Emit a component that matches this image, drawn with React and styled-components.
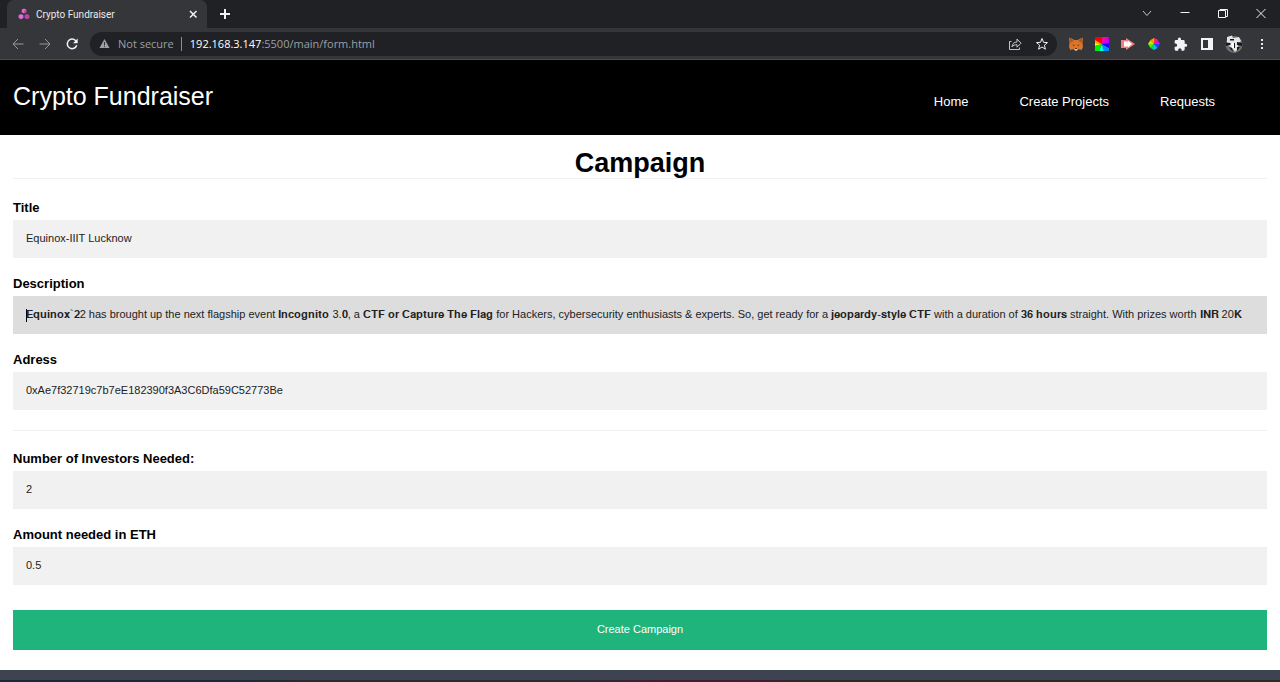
import React from 'react'

import styled, { createGlobalStyle } from 'styled-components';


const extensions = [
    { name: 'MetaMask', Icon: FoxIcon },
    { name: 'Color grid', Icon: RainbowSquare },
    { name: 'Video speed', Icon: ArrowIcon },
    { name: 'Color wheel', Icon: WheelIcon },
    { name: 'Extensions', Icon: PuzzleIcon },
    { name: 'Side panel', Icon: PanelIcon },
    { name: 'Profile', Icon: Avatar, wide: true },
    { name: 'Menu', Icon: DotsIcon },
]

const description = '𝐄𝐪𝐮𝐢𝐧𝐨𝐱`𝟐2 has brought up the next flagship event 𝐈𝐧𝐜𝐨𝐠𝐧𝐢𝐭𝐨 3.𝟎, a 𝐂𝐓𝐅 𝐨𝐫 𝐂𝐚𝐩𝐭𝐮𝐫𝐞 𝐓𝐡𝐞 𝐅𝐥𝐚𝐠 for Hackers, cybersecurity enthusiasts & experts. So, get ready for a 𝐣𝐞𝐨𝐩𝐚𝐫𝐝𝐲-𝐬𝐭𝐲𝐥𝐞 𝐂𝐓𝐅 with a duration of 𝟑𝟔 𝐡𝐨𝐮𝐫𝐬 straight. With prizes worth 𝐈𝐍𝐑 20𝐊'


function App() {
  return (
    <>
        <GlobalStyle />
        <Browser />
        <Header>
            <Brand href="#">Crypto Fundraiser</Brand>
            <Nav>
                <NavLink href="#">Home</NavLink>
                <NavLink href="#">Create Projects</NavLink>
                <NavLink href="#">Requests</NavLink>
            </Nav>
        </Header>
        <Form onSubmit={(e) => e.preventDefault()}>
            <Heading>Campaign</Heading>
            <Field id="title" label="Title" value="Equinox-IIIT Lucknow" />
            <Field id="description" label="Description" value={description} active />
            <Field id="address" label="Adress" value="0xAe7f32719c7b7eE182390f3A3C6Dfa59C52773Be" />
            <Divider />
            <Field id="investors" label="Number of Investors Needed:" value="2" />
            <Field id="amount" label="Amount needed in ETH" value="0.5" />
            <Submit type="submit">Create Campaign</Submit>
        </Form>
        <Taskbar />
    </>
  )
}

export default App


function Field({ id, label, value, active }) {
  return (
    <FieldBox>
        <Label htmlFor={id}>{label}</Label>
        <Input id={id} type="text" defaultValue={value} $active={active} />
    </FieldBox>
  )
}


function Browser() {
  return (
    <Chrome>
        <TabStrip>
            <Tab>
                <Favicon viewBox="0 0 12 12">
                    <path fill="#e667d5" d="M6 .5l2.300 1.300v2.500L6 5.600 3.700 4.300V1.800zM3 6l2.400 1.300v2.600L3 11.200.6 9.900V7.300z" />
                    <path fill="#b946a9" d="M9 6l2.400 1.300v2.600L9 11.200 6.600 9.900V7.300zM6 3v2.600l2.300-1.300V1.800z" />
                </Favicon>
                <TabTitle>Crypto Fundraiser</TabTitle>
                <IconButton aria-label="Close tab">
                    <Glyph viewBox="0 0 16 16" $weight={1.5}><path d="M5 5l6.500 6.500M11.500 5L5 11.500" /></Glyph>
                </IconButton>
            </Tab>
            <IconButton aria-label="New tab">
                <Glyph viewBox="0 0 16 16" $weight={2}><path d="M8 3v10M3 8h10" /></Glyph>
            </IconButton>
            <WindowControls>
                <IconButton aria-label="Search tabs">
                    <Glyph viewBox="0 0 16 16" $dim><path d="M4 5l4 4.500L12 5" /></Glyph>
                </IconButton>
                <IconButton aria-label="Minimize">
                    <Glyph viewBox="0 0 16 16"><path d="M3.500 6.500h9" /></Glyph>
                </IconButton>
                <IconButton aria-label="Restore">
                    <Glyph viewBox="0 0 16 16"><path d="M3.500 4.500h7v7h-7zM5 4V3.500h7.500v7H11" /></Glyph>
                </IconButton>
                <IconButton aria-label="Close window">
                    <Glyph viewBox="0 0 16 16"><path d="M3.500 3l9 9M12.500 3l-9 9" /></Glyph>
                </IconButton>
            </WindowControls>
        </TabStrip>
        <Toolbar>
            <NavButtons>
                <IconButton aria-label="Back">
                    <Glyph viewBox="0 0 16 16" $faded><path d="M13.500 8H3.500M8 3L3 8l5 5" /></Glyph>
                </IconButton>
                <IconButton aria-label="Forward">
                    <Glyph viewBox="0 0 16 16" $faded><path d="M2.500 8h10M8 3l5 5-5 5" /></Glyph>
                </IconButton>
                <IconButton aria-label="Reload">
                    <Glyph viewBox="0 0 16 16" $weight={1.5}>
                        <path d="M12.700 9.300a4.800 4.800 0 1 1-1.200-4.800L12.500 5.500" />
                        <path fill="#f1f3f4" stroke="none" d="M13.700 2.500v4.700H9z" />
                    </Glyph>
                </IconButton>
            </NavButtons>
            <AddressBar>
                <Warning viewBox="0 0 12 12"><path fill="#9aa0a6" d="M6 1l5.500 10H.5z" /><path stroke="#202124" d="M6 4.500V8M6 9v1" /></Warning>
                <Security>Not secure</Security>
                <Url><b>192.168.3.147</b>:5500/main/form.html</Url>
                <IconButton aria-label="Share">
                    <Glyph viewBox="0 0 16 16" $dim><path d="M4.500 5.500h-2v8h10V11.500M5 11c.3-3.300 2-5 5-5V3L14 7.200 10 11.200V8.700c-2.300 0-3.900.6-5 2.300z" /></Glyph>
                </IconButton>
                <IconButton aria-label="Bookmark">
                    <Glyph viewBox="0 0 16 16"><path d="M8 2.500l1.500 3.800 4 .3-3.100 2.600 1 4L8 11l-3.400 2.200 1-4-3.100-2.600 4-.3z" /></Glyph>
                </IconButton>
            </AddressBar>
            <Extensions>
                {extensions.map(({ name, Icon, wide }) => (
                    <IconButton key={name} aria-label={name} $wide={wide}><Icon /></IconButton>
                ))}
            </Extensions>
        </Toolbar>
    </Chrome>
  )
}


function FoxIcon() {
  return (
    <Art viewBox="0 0 16 16">
        <path fill="#d9742a" d="M1 1.500L6.500 4h3L15 1.500 14.500 7l.5 4-1.300 3-3.200-.7L9 14.500H7l-1.500-1.200-3.200.7L1 11l.5-4z" />
        <path fill="#a35a24" d="M1 1.500L6 5 2.500 6.500zM15 1.500L10 5l3.500 1.500z" />
        <path fill="#4a3326" d="M4.500 8.500l2 .5-.5 1.200zM11.500 8.500l-2 .5.500 1.200z" />
        <path fill="#d8cfc8" d="M6.500 12.500h3L9 14.500H7z" />
        <path fill="#2b3440" d="M7 12h2v1H7z" />
    </Art>
  )
}

function RainbowSquare() {
  return (
    <Art viewBox="0 0 16 16">
        <path fill="#f00" d="M8 8L1 4V1h7z" />
        <path fill="#fa0" d="M8 8L1 4v3z" />
        <path fill="#ef0" d="M8 8L1 7v3z" />
        <path fill="#0e0" d="M8 8l-7 2v5h4z" />
        <path fill="#0fd" d="M8 8l-3 7h5z" />
        <path fill="#08f" d="M8 8l2 7h5v-3z" />
        <path fill="#20f" d="M8 8l7 4V7z" />
        <path fill="#b0f" d="M8 8l7-1V1z" />
        <path fill="#f0a" d="M8 8l7-7H8z" />
    </Art>
  )
}

function ArrowIcon() {
  return (
    <Art viewBox="0 0 16 16">
        <path fill="#f0807f" d="M1 4h5V2l9 6-9 6v-2H1z" />
        <path fill="#fff" d="M4 5.500h4V4.500L12 8l-4 3.500v-1H4z" />
    </Art>
  )
}

function WheelIcon() {
  return (
    <Art viewBox="0 0 16 16">
        <path fill="#f33" d="M8 8V2l3.500 1.500z" />
        <path fill="#e0f" d="M8 8l3.500-4.500L14 8z" />
        <path fill="#24f" d="M8 8h6l-2.500 4z" />
        <path fill="#0bf" d="M8 8l3.500 4L8 14z" />
        <path fill="#0d5" d="M8 8v6l-3.500-2z" />
        <path fill="#5e0" d="M8 8l-3.500 4L2 8z" />
        <path fill="#dd0" d="M8 8H2l2.500-4z" />
        <path fill="#f90" d="M8 8L4.500 4 8 2z" />
    </Art>
  )
}

function PuzzleIcon() {
  return (
    <Art viewBox="0 0 24 24">
        <path fill="#f1f3f4" d="M20.500 11.500H19V8a2 2 0 0 0-2-2h-3.500V4.500a2.300 2.300 0 0 0-4.600 0V6H6a2 2 0 0 0-2 2v3.300h1.200a2.500 2.500 0 0 1 0 5H4V20a2 2 0 0 0 2 2h3.300v-1.200a2.500 2.500 0 0 1 5 0V22H17a2 2 0 0 0 2-2v-3.800h1.500a2.300 2.300 0 0 0 0-4.700z" />
    </Art>
  )
}

function PanelIcon() {
  return (
    <Art viewBox="0 0 16 16">
        <path fill="#f1f3f4" fillRule="evenodd" d="M3 2h12v12H3zM5 4v8h5V4z" />
    </Art>
  )
}

function Avatar() {
  return (
    <Art viewBox="0 0 20 20">
        <circle cx="10" cy="10.500" r="8.500" fill="#6d6f70" />
        <path fill="#e4e4e4" d="M3 3l5-1.500 1 2.500 6-1 2 4-2.500 2-.5 6-3 3-3-4-5-3z" />
        <path fill="#161718" d="M1.500 8.500l5 .5v2l-4.500 1zM13 8l5 1v3l-5-1zM5 13l3 1 1 4zM13 13h3l-3 4zM6 5h4v1.500H6zM10 9h1v5h-1z" />
        <path fill="#fff" d="M7.500 9H10v5H8z" />
    </Art>
  )
}

function DotsIcon() {
  return (
    <Art viewBox="0 0 16 16">
        <path fill="#e8eaed" d="M7 3h2v2H7zM7 7h2v2H7zM7 11h2v2H7z" />
    </Art>
  )
}


const GlobalStyle = createGlobalStyle`
    * {
        box-sizing: border-box;
    }

    body {
        margin: 0;
        background: #fff;
        color: #000;
        font-family: "Liberation Sans", Arial, sans-serif;
    }
`


const Chrome = styled.div`
    background: #35363a;
    border-bottom: 1px solid #4a4b4f;
    color: #e8eaed;
`


const TabStrip = styled.div`
    display: flex;
    align-items: center;
    gap: 10px;
    height: 28px;
    padding: 0 11px 0 7px;
    background: #202124;
`


const Tab = styled.div`
    display: flex;
    align-items: center;
    gap: 6px;
    width: 200px;
    height: 28px;
    padding: 0 6px 0 11px;
    border-radius: 7px 7px 0 0;
    background: #35363a;
`


const TabTitle = styled.span`
    flex: 1;
    font-family: Roboto, sans-serif;
    font-size: 10px;
`


const Favicon = styled.svg`
    width: 12px;
    height: 12px;
`


const IconButton = styled.button`
    display: grid;
    place-items: center;
    flex-shrink: 0;
    width: ${({ $wide }) => ($wide ? '20px' : '16px')};
    height: ${({ $wide }) => ($wide ? '20px' : '16px')};
    padding: 0;
    border: 0;
    background: none;
`


const Glyph = styled.svg`
    width: 16px;
    height: 16px;
    fill: none;
    stroke: ${({ $faded, $dim }) => ($faded ? '#96989c' : $dim ? '#c4c7ca' : '#f1f3f4')};
    stroke-width: ${({ $weight }) => $weight || 1};
`


const Art = styled.svg`
    width: 100%;
    height: 100%;
`


const WindowControls = styled.div`
    display: flex;
    gap: 22px;
    margin-left: auto;
`


const Toolbar = styled.div`
    display: flex;
    align-items: center;
    height: 31px;
    padding: 0 10px;
`


const NavButtons = styled.div`
    display: flex;
    gap: 11px;
`


const AddressBar = styled.div`
    display: flex;
    flex: 1;
    align-items: center;
    gap: 8px;
    height: 24px;
    margin-left: 10px;
    padding: 0 7px 0 9px;
    border-radius: 12px;
    background: #202124;
    font-family: "Open Sans", "Noto Sans", sans-serif;
    font-size: 11px;

    button + button {
        margin-left: 3px;
    }
`


const Warning = styled.svg`
    width: 11px;
    height: 11px;
`


const Security = styled.span`
    padding-right: 7px;
    border-right: 1px solid #8a8d91;
    line-height: 14px;
    color: #9aa0a6;
`


const Url = styled.span`
    flex: 1;
    color: #9aa0a6;

    b {
        font-weight: 400;
        color: #fff;
    }
`


const Extensions = styled.div`
    display: flex;
    align-items: center;
    gap: 10px;
    margin-left: 11px;
`


const Header = styled.header`
    display: flex;
    justify-content: space-between;
    align-items: center;
    height: 75px;
    padding: 0 65px 2px 13px;
    background: #000;
`


const Brand = styled.a`
    font-size: 25px;
    color: #fff;
    text-decoration: none;
`


const Nav = styled.nav`
    display: flex;
    gap: 51px;
    padding-top: 10px;
`


const NavLink = styled.a`
    font-size: 13px;
    color: #fff;
    text-decoration: none;
`


const Form = styled.form`
    padding: 13px 13px 20px;
`


const Heading = styled.h1`
    margin: 0 0 21px;
    border-bottom: 1px solid #f0f0f0;
    font-size: 27px;
    line-height: 30px;
    text-align: center;
`


const Divider = styled.hr`
    margin: 20px 0;
    border: 0;
    border-top: 1px solid #f0f0f0;
`


const FieldBox = styled.div`
    margin-bottom: 18px;
`


const Label = styled.label`
    display: block;
    margin-bottom: 4px;
    font-size: 13px;
    font-weight: 700;
    line-height: 16px;
`


const Input = styled.input`
    display: block;
    width: 100%;
    height: 38px;
    padding: 0 13px 2px;
    border: 0;
    outline: 0;
    background: ${({ $active }) => ($active ? 'linear-gradient(#000, #000) 13px 50% / 1px 13px no-repeat #ddd' : '#f1f1f1')};
    font-family: "Liberation Sans", Arial, sans-serif;
    font-size: 11px;
    color: #222;
`


const Submit = styled.button`
    display: block;
    width: 100%;
    height: 40px;
    margin-top: 25px;
    padding-bottom: 3px;
    border: 0;
    background: #1fb47c;
    font-family: "Liberation Sans", Arial, sans-serif;
    font-size: 11px;
    color: #fff;
`


const Taskbar = styled.footer`
    height: 12px;
    border-bottom: 2px solid;
    border-image: linear-gradient(90deg, #182a35 18%, #292b31 24%, #292b31 45%, #451a35 52%, #451a35 58%, #292c22 64%, #292c22) 1;
    background: #3d4350;
`
